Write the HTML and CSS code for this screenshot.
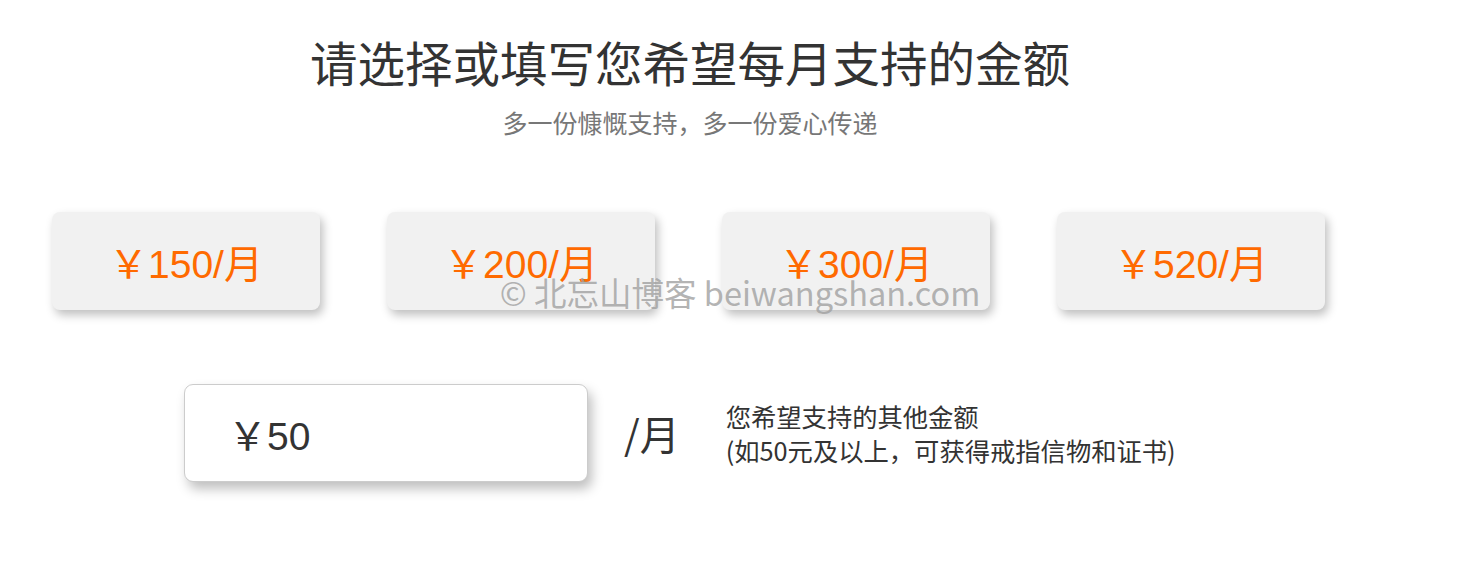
FILE: index.html
```html
<!DOCTYPE html>
<html lang="zh-CN">
<head>
<meta charset="utf-8">
<title>每月支持</title>
<link rel="stylesheet" href="styles.css">
</head>
<body>
<main class="page">
  <header class="intro">
    <h1 class="title">请选择或填写您希望每月支持的金额</h1>
    <p class="subtitle">多一份慷慨支持，多一份爱心传递</p>
  </header>
  <div class="plans">
    <button class="plan">￥150/月</button>
    <button class="plan">￥200/月</button>
    <button class="plan">￥300/月</button>
    <button class="plan">￥520/月</button>
  </div>
  <div class="custom">
    <div class="amount-box">￥50</div>
    <span class="per">/月</span>
    <p class="note">您希望支持的其他金额<br>(如50元及以上，可获得戒指信物和证书)</p>
  </div>
</main>
<div class="watermark">© 北忘山博客 beiwangshan.com</div>
</body>
</html>
```
FILE: styles.css
```css
html, body {
  margin: 0;
  padding: 0;
  background: #ffffff;
}
body {
  font-family: "Liberation Sans", "Noto Sans CJK SC", sans-serif;
  color: #333333;
  min-height: 581px;
}
.page {
  width: 1380px;
  padding-top: 32px;
  padding-bottom: 80px;
}
.intro {
  display: flex;
  flex-direction: column;
  align-items: center;
}
.title {
  margin: 0;
  font-family: "Noto Sans CJK SC", sans-serif;
  font-weight: 400;
  font-size: 47.5px;
  line-height: 60px;
  color: #333333;
}
.subtitle {
  margin: 13px 0 0;
  font-family: "Noto Sans CJK SC", sans-serif;
  font-size: 25px;
  line-height: 34px;
  color: #777777;
}
.plans {
  display: flex;
  gap: 67px;
  padding-left: 52px;
  margin-top: 73px;
}
.plan {
  width: 268px;
  height: 98px;
  border: none;
  border-radius: 8px;
  background: #f1f1f1;
  box-shadow: 3px 5px 10px rgba(0, 0, 0, 0.25);
  font-family: "Liberation Sans", "Noto Sans CJK SC", sans-serif;
  font-size: 39px;
  color: #ff6a00;
  padding: 0;
  cursor: pointer;
}
.custom {
  display: flex;
  align-items: center;
  margin-top: 74px;
  padding-left: 184px;
}
.amount-box {
  box-sizing: border-box;
  width: 404px;
  height: 98px;
  border: 1px solid #cccccc;
  border-radius: 9px;
  background: #ffffff;
  box-shadow: 4px 7px 12px rgba(0, 0, 0, 0.25);
  display: flex;
  align-items: center;
  padding-left: 43px;
  font-size: 39px;
  color: #333333;
}
.per {
  margin-left: 36px;
  font-family: "Noto Sans CJK SC", sans-serif;
  font-size: 40px;
  color: #333333;
}
.note {
  margin: 0 0 0 46px;
  font-family: "Noto Sans CJK SC", sans-serif;
  font-size: 25.3px;
  line-height: 34px;
  color: #333333;
}
.watermark {
  position: absolute;
  left: 740px;
  top: 291px;
  transform: translate(-50%, -50%);
  font-family: "Noto Sans CJK SC", sans-serif;
  font-size: 32.5px;
  color: rgba(160, 160, 160, 0.8);
  white-space: nowrap;
  pointer-events: none;
}
```
